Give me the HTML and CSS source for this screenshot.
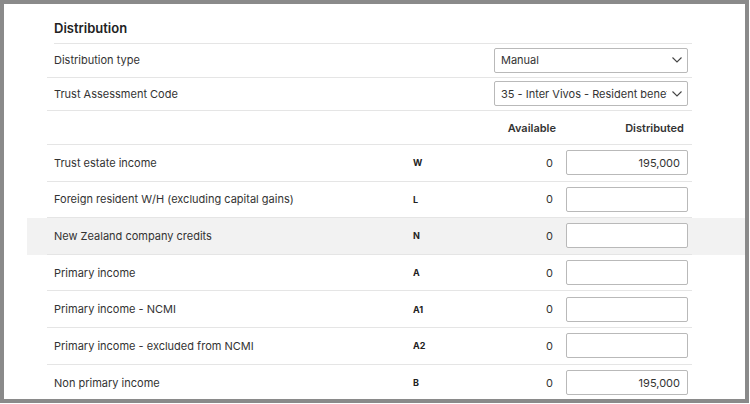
FILE: index.html
```html
<!doctype html>
<html>
<head>
    <title>Distribution</title>
    <meta charset="utf-8">
    <link rel="stylesheet" href="styles.css">
</head>
<body>
    <div class="marco">
        <div class="seccion">
            <h2 class="titulo">Distribution</h2>

            <!-- Ajustes -->
            <div class="fila">
                <div class="celda ajuste">
                    <span>Distribution type</span>
                    <div class="selector">
                        <span class="sel-texto">Manual</span>
                        <svg class="flecha" width="10" height="6" viewBox="0 0 10 6"><path d="M0.5 0.5 L5 5 L9.5 0.5" fill="none" stroke="#444" stroke-width="1.1"/></svg>
                    </div>
                </div>
            </div>
            <div class="fila">
                <div class="celda ajuste">
                    <span>Trust Assessment Code</span>
                    <div class="selector">
                        <span class="sel-texto">35 - Inter Vivos - Resident beneficiary</span>
                        <svg class="flecha" width="10" height="6" viewBox="0 0 10 6"><path d="M0.5 0.5 L5 5 L9.5 0.5" fill="none" stroke="#444" stroke-width="1.1"/></svg>
                    </div>
                </div>
            </div>

            <!-- Cabecera -->
            <div class="fila">
                <div class="celda cabecera">
                    <span></span>
                    <span></span>
                    <span class="disp">Available</span>
                    <span class="dist">Distributed</span>
                </div>
            </div>

            <!-- Importes -->
            <div class="fila">
                <div class="celda dato">
                    <span>Trust estate income</span>
                    <span class="codigo">W</span>
                    <span class="num">0</span>
                    <input class="importe" type="text" value="195,000">
                </div>
            </div>
            <div class="fila">
                <div class="celda dato">
                    <span>Foreign resident W/H (excluding capital gains)</span>
                    <span class="codigo">L</span>
                    <span class="num">0</span>
                    <input class="importe" type="text" value="">
                </div>
            </div>
            <div class="fila activa">
                <div class="celda dato">
                    <span>New Zealand company credits</span>
                    <span class="codigo">N</span>
                    <span class="num">0</span>
                    <input class="importe" type="text" value="">
                </div>
            </div>
            <div class="fila">
                <div class="celda dato">
                    <span>Primary income</span>
                    <span class="codigo">A</span>
                    <span class="num">0</span>
                    <input class="importe" type="text" value="">
                </div>
            </div>
            <div class="fila">
                <div class="celda dato">
                    <span>Primary income - NCMI</span>
                    <span class="codigo">A1</span>
                    <span class="num">0</span>
                    <input class="importe" type="text" value="">
                </div>
            </div>
            <div class="fila">
                <div class="celda dato">
                    <span>Primary income - excluded from NCMI</span>
                    <span class="codigo">A2</span>
                    <span class="num">0</span>
                    <input class="importe" type="text" value="">
                </div>
            </div>
            <div class="fila">
                <div class="celda dato ultima">
                    <span>Non primary income</span>
                    <span class="codigo">B</span>
                    <span class="num">0</span>
                    <input class="importe" type="text" value="195,000">
                </div>
            </div>
        </div>
    </div>
</body>
</html>
```

FILE: styles.css
```css
body {
    margin: 0;
    background-color: white;
    font-family: Inter, "Liberation Sans", sans-serif;
    color: #333;
}
.marco {
    width: 749px;
    height: 403px;
    box-sizing: border-box;
    border: 4px solid #8a8a8a;
    overflow: hidden;
}
.seccion {
    margin-left: 23px;
}
.titulo {
    margin: 0 53px 0 27px;
    height: 40px;
    box-sizing: border-box;
    padding-top: 16px;
    font-size: 13px;
    font-weight: 600;
    color: #222;
    border-bottom: 1px solid #e5e5e5;
}
.fila {
    padding: 0 53px 0 20px;
}
.activa {
    background-color: #f2f2f2;
}
.celda {
    border-bottom: 1px solid #e5e5e5;
    box-sizing: border-box;
    font-size: 11px;
}
.ajuste {
    display: flex;
    justify-content: space-between;
    align-items: center;
    height: 33.5px;
    padding: 0 4px 0 7px;
}
.selector {
    width: 194px;
    height: 25px;
    box-sizing: border-box;
    border: 1px solid #b9b9b9;
    border-radius: 2px;
    display: flex;
    align-items: center;
    padding: 0 5px 0 6px;
    gap: 5px;
    background-color: white;
}
.sel-texto {
    flex: 1;
    white-space: nowrap;
    overflow: hidden;
}
.flecha {
    flex: none;
}
.cabecera, .dato {
    display: grid;
    align-items: center;
    padding: 0 4px 0 7px;
}
.cabecera {
    height: 34px;
    font-weight: 600;
    grid-template-columns: 359px 60px 83px 128px;
}
.cabecera .disp {
    text-align: right;
}
.cabecera .dist {
    text-align: right;
}
.dato {
    height: 36.6px;
    grid-template-columns: 359px 60px 80px 135px;
}
.ultima {
    border-bottom: none;
}
.codigo {
    font-size: 9px;
    font-weight: 700;
    color: #222;
}
.num {
    text-align: right;
}
.importe {
    margin-left: 13px;
    width: 122px;
    height: 25px;
    box-sizing: border-box;
    border: 1px solid #b9b9b9;
    border-radius: 2px;
    font-family: Inter, "Liberation Sans", sans-serif;
    font-size: 11px;
    color: #333;
    text-align: right;
    padding: 0 7px;
}
```
